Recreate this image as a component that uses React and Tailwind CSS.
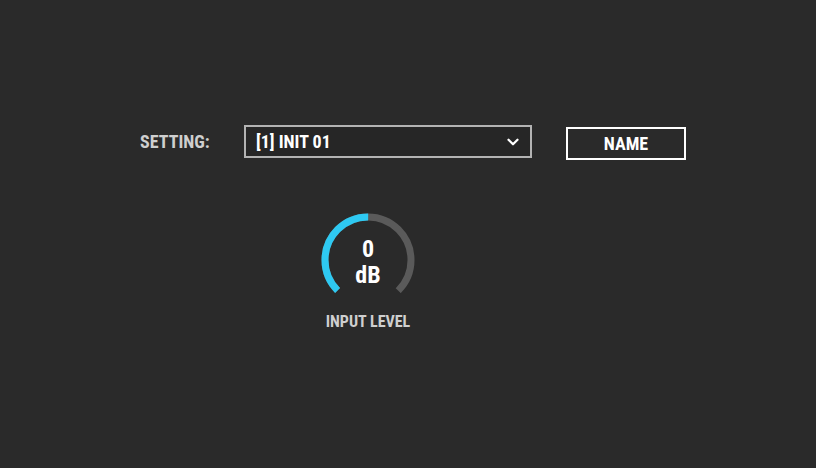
import { ChevronDown } from "lucide-react";

const FONT = { fontFamily: '"Roboto Condensed", "Liberation Sans Narrow", "DejaVu Sans Condensed", sans-serif' };

function Knob({ value, unit, label }) {
  const r = 43;
  const c = 2 * Math.PI * r;
  const span = c * 0.75;
  return (
    <div className="flex w-[100px] flex-col items-center">
      <div className="relative h-[96px] w-[96px]">
        <svg width="96" height="96" viewBox="0 0 96 96" className="rotate-[135deg]">
          <circle cx="48" cy="48" r={r} fill="none" stroke="#5a5a5a" strokeWidth="7" strokeDasharray={`${span} ${c}`} />
          <circle cx="48" cy="48" r={r} fill="none" stroke="#2ec9f2" strokeWidth="7" strokeDasharray={`${span / 2} ${c}`} />
        </svg>
        <div className="absolute inset-0 flex flex-col items-center justify-center pt-[4px] text-[24px] font-bold leading-[26px] text-white">
          <span>{value}</span>
          <span>{unit}</span>
        </div>
      </div>
      <div className="mt-[2px] text-[16px] font-bold text-[#cfcfcf]">{label}</div>
    </div>
  );
}

export default function App() {
  return (
    <div className="h-[468px] w-[816px] bg-[#2a2a2a]" style={FONT}>
      <div className="flex items-start pl-[140px] pt-[125px]">
        <div className="flex h-[33px] w-[104px] items-center text-[18px] font-bold text-[#cfcfcf]">SETTING:</div>
        <div className="flex h-[33px] w-[288px] items-center justify-between border-2 border-[#b3b3b3] bg-[#262626] pl-[10px] pr-[8px]">
          <span className="text-[18px] font-bold text-white">[1] INIT 01</span>
          <ChevronDown className="h-[18px] w-[18px] text-white" strokeWidth={3} />
        </div>
        <button className="ml-[34px] mt-[2px] h-[33px] w-[120px] border-2 border-white text-[18px] font-bold text-white">
          NAME
        </button>
      </div>
      <div className="pl-[318px] pt-[52px]">
        <Knob value="0" unit="dB" label="INPUT LEVEL" />
      </div>
    </div>
  );
}
